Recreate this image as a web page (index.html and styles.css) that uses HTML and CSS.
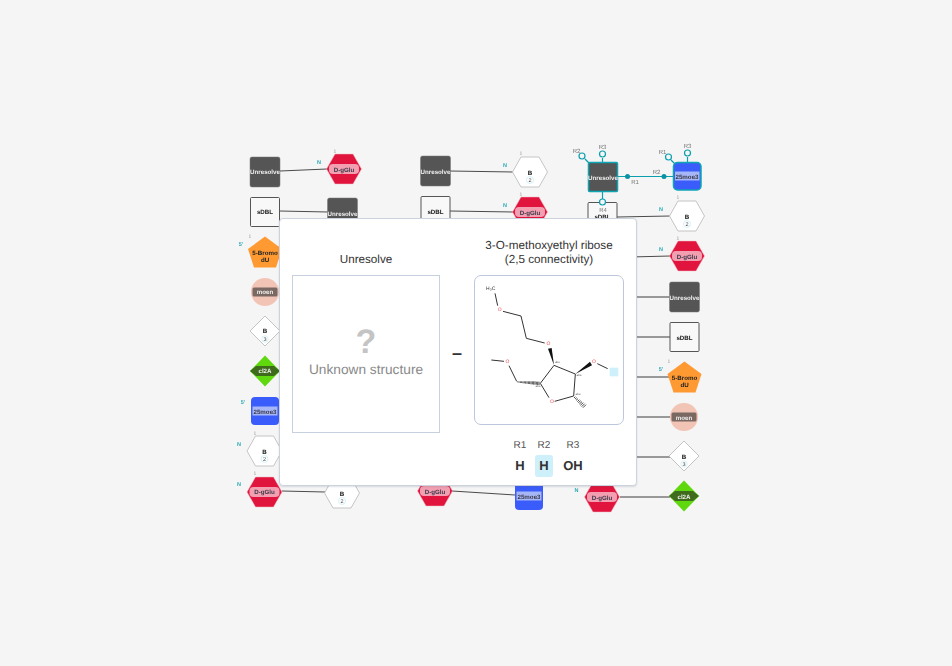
FILE: index.html
```html
<!DOCTYPE html>
<html lang="en">
<head>
<meta charset="utf-8">
<title>Monomer comparison</title>
<link rel="stylesheet" href="styles.css">
</head>
<body>
<main class="canvas">
<svg class="graph" width="952" height="666" viewBox="0 0 952 666" xmlns="http://www.w3.org/2000/svg">
  <defs>
    <g id="unres"><rect x="-15" y="-15" width="30" height="30" rx="2" class="s-unres"/></g>
    <g id="sdbl"><rect x="-14.5" y="-14.5" width="29" height="29" rx="1" class="s-sdbl"/></g>
    <g id="hexw"><polygon points="-17.5,0 -9,-15 9,-15 17.5,0 9,15 -9,15" class="s-hexw"/><circle cx="0" cy="8" r="3.5" class="s-num"/></g>
    <g id="glu"><polygon points="-17.5,0 -9,-15 9,-15 17.5,0 9,15 -9,15" class="s-glu"/><rect x="-15" y="-5" width="30" height="10" rx="4" class="s-glup"/></g>
    <g id="penta"><polygon points="0,-15.5 17,-3 11,15.5 -11,15.5 -17,-3" class="s-penta"/></g>
    <g id="moen"><circle r="14" class="s-moen"/><rect x="-12.5" y="-4.5" width="25" height="9" rx="1.5" class="s-moenp"/></g>
    <g id="diaw"><polygon points="0,-15 15,0 0,15 -15,0" class="s-hexw"/><circle cx="0" cy="8" r="3.2" class="s-num"/></g>
    <g id="cl2a"><polygon points="0,-15.5 15,0 0,15.5 -15,0" class="s-cl2a"/><polygon points="-15,0 -9,-5 9,-5 15,0 9,5 -9,5" class="s-cl2ap"/></g>
    <g id="moe"><rect x="-14" y="-14" width="28" height="28" rx="4" class="s-moe"/><rect x="-12.5" y="-4.5" width="25" height="9" class="s-moep"/></g>
  </defs>

  <g class="bond">
    <line x1="280" y1="171" x2="327" y2="169"/>
    <line x1="280" y1="211" x2="328" y2="212"/>
    <line x1="450" y1="171" x2="513" y2="172"/>
    <line x1="450" y1="211" x2="513" y2="212"/>
    <line x1="282" y1="491" x2="325" y2="492"/>
    <line x1="452" y1="491" x2="515" y2="495"/>
    <line x1="617" y1="217" x2="670" y2="216"/>
    <line x1="630" y1="257" x2="670" y2="256"/>
  </g>
  <g class="bond-strong">
    <line x1="630" y1="297" x2="670" y2="297"/>
    <line x1="630" y1="337" x2="670" y2="337"/>
    <line x1="630" y1="377" x2="670" y2="377"/>
    <line x1="630" y1="417" x2="670" y2="417"/>
    <line x1="630" y1="457" x2="670" y2="457"/>
    <line x1="620" y1="497" x2="670" y2="497"/>
  </g>

  <g class="node"><use href="#unres" x="265" y="172"/><text x="265" y="174" class="t-light">Unresolve</text></g>
  <g class="node"><use href="#sdbl" x="265" y="212"/><text x="265" y="214" class="t-dark">sDBL</text></g>
  <g class="node"><use href="#penta" x="265" y="252"/><text x="265" y="255" class="t-dark">5-Bromo</text><text x="265" y="262" class="t-dark">dU</text></g>
  <g class="node"><use href="#moen" x="265" y="292"/><text x="265" y="294" class="t-light">moen</text></g>
  <g class="node"><use href="#diaw" x="265" y="331"/><text x="265" y="333" class="t-dark">B</text><text x="265" y="341" class="t-num">3</text></g>
  <g class="node"><use href="#cl2a" x="265" y="371"/><text x="265" y="373" class="t-light">cl2A</text></g>
  <g class="node"><use href="#moe" x="265" y="411"/><text x="265" y="414" class="t-moe">25moe3</text></g>
  <g class="node"><use href="#hexw" x="264.500" y="451"/><text x="264.500" y="454" class="t-dark">B</text><text x="264.500" y="461" class="t-num">2</text></g>
  <g class="node"><use href="#glu" x="264.500" y="492"/><text x="264.500" y="494" class="t-moe">D-gGlu</text></g>

  <g class="node"><use href="#glu" x="344" y="169"/><text x="344" y="172" class="t-moe">D-gGlu</text></g>
  <g class="node"><use href="#unres" x="342.500" y="213"/><text x="342.500" y="216" class="t-light">Unresolve</text></g>
  <g class="node"><use href="#hexw" x="342" y="493"/><text x="342" y="496" class="t-dark">B</text><text x="342" y="503" class="t-num">2</text></g>

  <g class="node"><use href="#unres" x="435.500" y="171"/><text x="435.500" y="174" class="t-light">Unresolve</text></g>
  <g class="node"><use href="#sdbl" x="435.500" y="211"/><text x="435.500" y="214" class="t-dark">sDBL</text></g>
  <g class="node"><use href="#glu" x="435" y="491"/><text x="435" y="494" class="t-moe">D-gGlu</text></g>

  <g class="node"><use href="#hexw" x="530" y="172"/><text x="530" y="175" class="t-dark">B</text><text x="530" y="182" class="t-num">2</text></g>
  <g class="node"><use href="#glu" x="530" y="212"/><text x="530" y="215" class="t-moe">D-gGlu</text></g>
  <g class="node"><use href="#moe" x="529" y="496"/><text x="529" y="499" class="t-moe">25moe3</text></g>

  <g class="node"><use href="#sdbl" x="602.500" y="217"/><text x="602.500" y="219" class="t-dark">sDBL</text></g>
  <g class="node"><use href="#glu" x="602" y="497"/><text x="602" y="500" class="t-moe">D-gGlu</text></g>

  <g class="node"><use href="#hexw" x="687" y="216"/><text x="687" y="219" class="t-dark">B</text><text x="687" y="226" class="t-num">2</text></g>
  <g class="node"><use href="#glu" x="687" y="256"/><text x="687" y="259" class="t-moe">D-gGlu</text></g>
  <g class="node"><use href="#unres" x="684.500" y="297"/><text x="684.500" y="300" class="t-light">Unresolve</text></g>
  <g class="node"><use href="#sdbl" x="684.500" y="337"/><text x="684.500" y="340" class="t-dark">sDBL</text></g>
  <g class="node"><use href="#penta" x="684.500" y="377"/><text x="684.500" y="380" class="t-dark">5-Bromo</text><text x="684.500" y="387" class="t-dark">dU</text></g>
  <g class="node"><use href="#moen" x="684" y="417"/><text x="684" y="420" class="t-light">moen</text></g>
  <g class="node"><use href="#diaw" x="684" y="456"/><text x="684" y="459" class="t-dark">B</text><text x="684" y="466" class="t-num">3</text></g>
  <g class="node"><use href="#cl2a" x="684" y="496"/><text x="684" y="499" class="t-light">cl2A</text></g>

  <g class="linker">
    <line x1="618" y1="176.500" x2="673" y2="176.500"/>
    <line x1="602.500" y1="158" x2="602.500" y2="162"/>
    <line x1="585" y1="159" x2="589" y2="163"/>
    <line x1="602.500" y1="192" x2="602.500" y2="199"/>
    <line x1="671" y1="160" x2="675" y2="164"/>
    <line x1="687.500" y1="157" x2="687.500" y2="162"/>
  </g>
  <rect x="588.500" y="162.500" width="29" height="29" rx="1" class="s-unres-sel"/>
  <text x="603" y="179.500" class="t-light">Unresolve</text>
  <rect x="673.500" y="162.500" width="27.500" height="27.500" rx="4" class="s-moe-sel"/>
  <rect x="675" y="171.500" width="24.500" height="9" class="s-moep"/>
  <text x="687" y="178.500" class="t-moe">25moe3</text>
  <g class="port">
    <circle cx="582" cy="156" r="3"/>
    <circle cx="602.500" cy="154" r="3"/>
    <circle cx="602.500" cy="202" r="3"/>
    <circle cx="668.500" cy="157" r="3"/>
    <circle cx="687.500" cy="153" r="3"/>
  </g>
  <circle cx="627.500" cy="176.500" r="2.500" class="dot"/>
  <circle cx="664" cy="176.500" r="2.500" class="dot"/>
  <g class="t-r">
    <text x="576.500" y="153">R2</text>
    <text x="602.500" y="149">R3</text>
    <text x="603" y="212">R4</text>
    <text x="635" y="184">R1</text>
    <text x="656.500" y="174">R2</text>
    <text x="662.500" y="154">R1</text>
    <text x="687.500" y="148">R3</text>
  </g>
  <g class="t-idx">
    <text x="335" y="153">1</text>
    <text x="250" y="238">1</text>
    <text x="255" y="435">1</text>
    <text x="255" y="475">1</text>
    <text x="521" y="155">1</text>
    <text x="521" y="196">1</text>
    <text x="678" y="199">1</text>
    <text x="678" y="240">1</text>
    <text x="669" y="363">1</text>
  </g>
  <g class="t-n">
    <text x="319" y="164">N</text>
    <text x="241" y="246">5'</text>
    <text x="243" y="404">5'</text>
    <text x="239" y="446">N</text>
    <text x="239" y="486">N</text>
    <text x="505" y="167">N</text>
    <text x="505" y="207">N</text>
    <text x="661" y="211">N</text>
    <text x="661" y="251">N</text>
    <text x="661" y="371">5'</text>
    <text x="576.500" y="492">N</text>
  </g>
</svg>

<section class="modal">
  <div class="panel">
    <h2 class="title title-low">Unresolve</h2>
    <div class="unknown">
      <span class="qmark">?</span>
      <span class="unknown-text">Unknown structure</span>
    </div>
  </div>
  <div class="minus">–</div>
  <div class="panel panel-right">
    <h2 class="title">3-O-methoxyethyl ribose<br>(2,5 connectivity)</h2>
    <div class="mol">
      <svg class="mol-svg" width="148" height="148" viewBox="13 16 444 444" xmlns="http://www.w3.org/2000/svg">
        <g class="mb">
          <path d="M73 68L81 105M97 122L151 136L167 203L222 217"/>
          <path d="M250 284L314 310L309 376L252 392M235 381L209 338L250 284"/>
          <path d="M138 332L115 285M100 272L62 268M380 279L411 294"/>
        </g>
        <polygon points="250,284 232,234 243,232" class="mw"/>
        <polygon points="314,310 358,273 364,284" class="mw"/>
        <g class="mh">
          <path d="M205 333V343M201 333V343M197 333V342M193 332V342M189 332V342M185 332V341M181 332V341M177 332V340M173 332V340M169 332V339M165 332V339M161 332V338M157 332V338M153 332V337M149 332V337M145 332V336M141 332V335"/>
          <path d="M314 378L310 382M318 381L313 385M322 384L316 389M326 387L320 393M330 390L323 396M334 393L326 400M338 396L329 404M342 399L333 408M346 402L337 411"/>
        </g>
        <text x="60" y="59" class="mt mt-k">H₃C</text>
        <text x="87" y="122" class="mt">O</text>
        <text x="233" y="224" class="mt">O</text>
        <text x="110" y="278" class="mt">O</text>
        <text x="370" y="278" class="mt">O</text>
        <text x="244" y="398" class="mt">O</text>
        <text x="260" y="278" class="ma">abs</text>
        <text x="325" y="316" class="ma">abs</text>
        <text x="322" y="374" class="ma">abs</text>
        <text x="202" y="349" class="ma">abs</text>
        <rect x="417" y="291" width="26" height="26" class="mr"/>
      </svg>
    </div>
    <div class="rgroups">
      <div class="rg rg-1"><span class="rg-k">R1</span><span class="rg-v">H</span></div>
      <div class="rg rg-2"><span class="rg-k">R2</span><span class="rg-v rg-hl">H</span></div>
      <div class="rg rg-3"><span class="rg-k">R3</span><span class="rg-v">OH</span></div>
    </div>
  </div>
</section>
</main>
</body>
</html>
```
FILE: styles.css
```css
* { box-sizing: border-box; }
html, body { margin: 0; padding: 0; height: 100%; }
body { background: #f5f5f5; font-family: "Liberation Sans", Arial, sans-serif; overflow: hidden; text-rendering: geometricPrecision; }
.canvas { position: relative; width: 952px; height: 666px; }
.graph { display: block; filter: blur(.25px); }

.bond line { stroke: #4a4a4a; stroke-width: 1; }
.bond-strong line { stroke: #999; stroke-width: 2; }
.linker line { stroke: #0c9fae; stroke-width: 1.2; }
.port circle { fill: #f5f5f5; stroke: #0c9fae; stroke-width: 1.2; }
.dot { fill: #0a93a2; }

.s-unres { fill: #555; stroke: #777; stroke-width: .5; }
.s-sdbl { fill: #f8f8f8; stroke: #555; stroke-width: 1; }
.s-hexw { fill: #fff; stroke: #c4c4c4; stroke-width: 1; }
.s-num { fill: #fff; stroke: #cdeef4; stroke-width: .8; }
.s-glu { fill: #e0143c; stroke: #f4b8c4; stroke-width: .5; }
.s-glup { fill: #f29fb1; }
.s-penta { fill: #ff9a33; }
.s-moen { fill: #f2c4b6; }
.s-moenp { fill: #7a6862; }
.s-cl2a { fill: #5fd80e; }
.s-cl2ap { fill: #3f6b1c; }
.s-moe { fill: #3a5cfa; }
.s-moep { fill: #a6b6f6; }
.s-unres-sel { fill: #555; stroke: #0ea5b4; stroke-width: 1.500; }
.s-moe-sel { fill: #3a5cfa; stroke: #0ea5b4; stroke-width: 1.500; }

.graph text { font-family: "Liberation Sans", Arial, sans-serif; text-anchor: middle; }
.t-light { font-size: 6.200px; font-weight: 700; fill: #f0f0f0; }
.t-dark { font-size: 6.200px; font-weight: 700; fill: #222; }
.t-moe { font-size: 6.200px; font-weight: 700; fill: #3a3a4a; }
.t-num { font-size: 5.500px; fill: #444; }
.t-r text { font-size: 6px; fill: #777; }
.t-idx text { font-size: 5px; fill: #999; }
.t-n text { font-size: 5.500px; font-weight: 700; fill: #22a6b3; }

.modal {
  position: absolute;
  left: 279px;
  top: 218px;
  width: 358px;
  height: 268px;
  display: flex;
  align-items: flex-start;
  padding: 0 12px;
  background: #fff;
  border: 1px solid #cdd3de;
  border-radius: 4px;
  box-shadow: 0 1px 2px rgba(90, 100, 120, .2);
}
.panel { width: 148px; flex: none; display: flex; flex-direction: column; align-items: center; padding-top: 20px; }
.panel-right { width: 150px; }
.title { margin: 0; height: 36px; font-size: 11.700px; font-weight: 400; line-height: 14px; text-align: center; color: #333; }
.title-low { padding-top: 14px; }
.unknown {
  width: 148px;
  height: 158px;
  display: flex;
  flex-direction: column;
  align-items: center;
  justify-content: center;
  border: 1px solid #c7d0de;
  color: #8a8a8a;
}
.qmark { font-size: 34px; font-weight: 700; line-height: 30px; color: #c4c4c4; }
.unknown-text { font-size: 13.700px; line-height: 18px; margin-top: 4px; margin-bottom: 2px; }
.minus { width: 34px; flex: none; padding-top: 124px; font-size: 18px; font-weight: 700; line-height: 20px; text-align: center; color: #333; }

.mol { width: 150px; height: 150px; border: 1px solid #bcc6dd; border-radius: 7px; }
.mol-svg { display: block; filter: blur(.2px); }
.mb path { fill: none; stroke: #333; stroke-width: 3; }
.mw { fill: #111; }
.mh path { fill: none; stroke: #222; stroke-width: 2.400; }
.mt { font-family: "Liberation Sans", Arial, sans-serif; font-size: 15px; fill: #f0555a; text-anchor: middle; }
.mt-k { fill: #333; }
.ma { font-family: "Liberation Sans", Arial, sans-serif; font-size: 9px; fill: #555; text-anchor: middle; }
.mr { fill: #cdf0fb; }

.rgroups { display: flex; justify-content: center; margin-top: 14px; }
.rg { display: flex; flex-direction: column; align-items: center; }
.rg-1, .rg-2 { width: 24px; }
.rg-3 { width: 34px; }
.rg-k { font-size: 10px; line-height: 14px; color: #555; }
.rg-v { margin-top: 2px; width: 18px; height: 22px; font-size: 13px; font-weight: 700; line-height: 22px; text-align: center; color: #333; border-radius: 3px; }
.rg-3 .rg-v { width: 30px; }
.rg-hl { background: #cdf0fb; }
```
